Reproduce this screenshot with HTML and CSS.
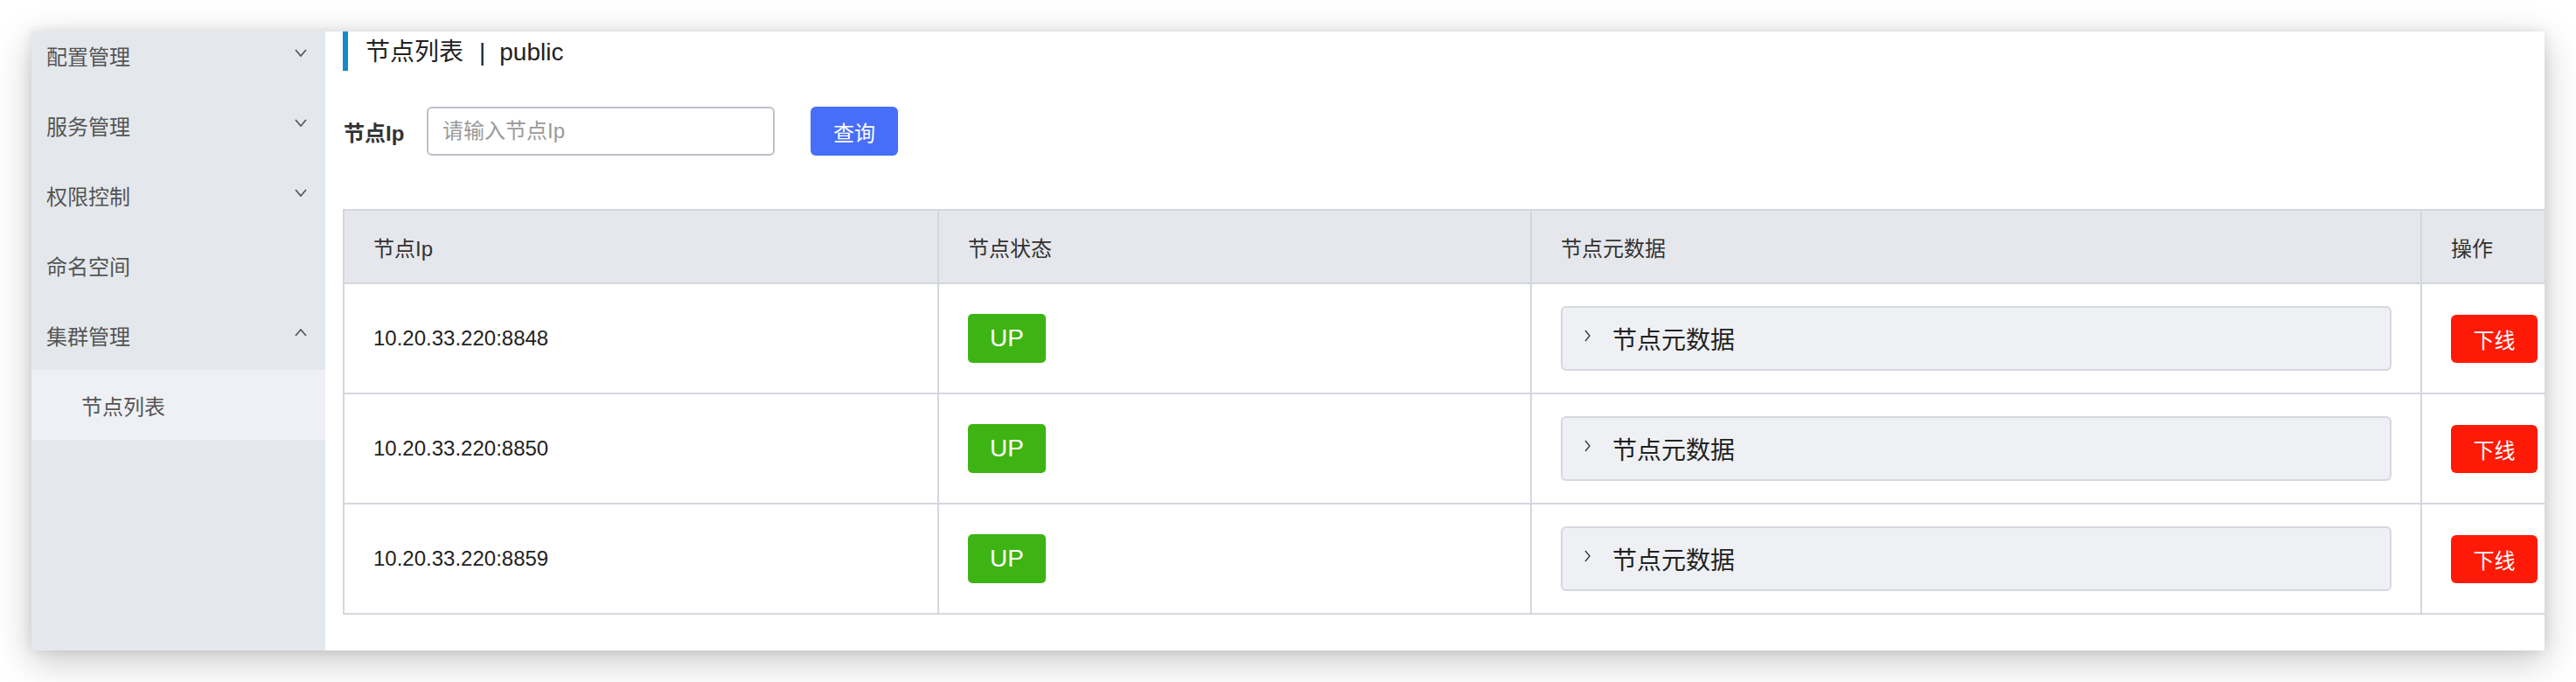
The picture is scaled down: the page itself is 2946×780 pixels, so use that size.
FILE: index.html
```html
<!DOCTYPE html>
<html lang="zh-CN">
<head>
<meta charset="utf-8">
<title>节点列表</title>
<link rel="stylesheet" href="styles.css">
</head>
<body>
<div class="window">
  <aside class="sidebar">
    <ul class="menu">
      <li class="menu-item"><span>配置管理</span><svg class="chev" viewBox="0 0 14 9"><polyline points="1,1 7,8 13,1"/></svg></li>
      <li class="menu-item"><span>服务管理</span><svg class="chev" viewBox="0 0 14 9"><polyline points="1,1 7,8 13,1"/></svg></li>
      <li class="menu-item"><span>权限控制</span><svg class="chev" viewBox="0 0 14 9"><polyline points="1,1 7,8 13,1"/></svg></li>
      <li class="menu-item"><span>命名空间</span></li>
      <li class="menu-item"><span>集群管理</span><svg class="chev" viewBox="0 0 14 9"><polyline points="1,8 7,1 13,8"/></svg></li>
      <li class="sub-item"><span>节点列表</span></li>
    </ul>
  </aside>
  <main class="main">
    <h1 class="title">节点列表<span class="sep">|</span>public</h1>
    <div class="filter">
      <label class="filter-label">节点Ip</label>
      <input class="filter-input" type="text" placeholder="请输入节点Ip">
      <button class="btn-query">查询</button>
    </div>
    <table class="grid">
      <colgroup>
        <col class="c1"><col class="c2"><col class="c3"><col class="c4">
      </colgroup>
      <thead>
        <tr><th>节点Ip</th><th>节点状态</th><th>节点元数据</th><th>操作</th></tr>
      </thead>
      <tbody>
        <tr>
          <td>10.20.33.220:8848</td>
          <td><span class="badge-up">UP</span></td>
          <td><div class="meta"><svg class="meta-chev" viewBox="0 0 7 14"><polyline points="1,1 6,7 1,13"/></svg><span>节点元数据</span></div></td>
          <td><button class="btn-off">下线</button></td>
        </tr>
        <tr>
          <td>10.20.33.220:8850</td>
          <td><span class="badge-up">UP</span></td>
          <td><div class="meta"><svg class="meta-chev" viewBox="0 0 7 14"><polyline points="1,1 6,7 1,13"/></svg><span>节点元数据</span></div></td>
          <td><button class="btn-off">下线</button></td>
        </tr>
        <tr>
          <td>10.20.33.220:8859</td>
          <td><span class="badge-up">UP</span></td>
          <td><div class="meta"><svg class="meta-chev" viewBox="0 0 7 14"><polyline points="1,1 6,7 1,13"/></svg><span>节点元数据</span></div></td>
          <td><button class="btn-off">下线</button></td>
        </tr>
      </tbody>
    </table>
  </main>
</div>
</body>
</html>
```

FILE: styles.css
```css
* { box-sizing: border-box; }
html, body { margin: 0; padding: 0; background: #ffffff; }
body {
  padding: 36px;
  font-family: "Liberation Sans", "Noto Sans CJK SC", sans-serif;
  color: #333;
}
.window {
  width: 2874px;
  height: 708px;
  display: flex;
  overflow: hidden;
  background: #fff;
  box-shadow: 0 12px 40px rgba(0,0,0,0.22), 0 0 12px rgba(0,0,0,0.10);
}
.sidebar {
  width: 336px;
  flex: none;
  background: #e4e8ec;
  overflow: hidden;
}
.menu {
  list-style: none;
  margin: -13px 0 0 0;
  padding: 0;
}
.menu-item {
  height: 80px;
  display: flex;
  align-items: center;
  justify-content: space-between;
  padding: 0 21px 0 17px;
  font-size: 24px;
  color: #555;
}
.chev {
  width: 14px;
  height: 9px;
  margin-top: -5px;
  fill: none;
  stroke: #5a5a5a;
  stroke-width: 1.8;
}
.sub-item {
  height: 80px;
  display: flex;
  align-items: center;
  padding-left: 57px;
  background: #eff0f5;
  font-size: 24px;
  color: #555;
}
.main {
  flex: 1;
  min-width: 0;
  padding-left: 20px;
  overflow: hidden;
}
.title {
  margin: 0;
  height: 45px;
  line-height: 45px;
  padding-left: 20px;
  padding-top: 1px;
  border-left: 6px solid #168acc;
  font-size: 28px;
  font-weight: normal;
  color: #222;
}
.sep { margin: 0 16px 0 18px; }
.filter {
  display: flex;
  align-items: center;
  margin-top: 41px;
  height: 56px;
}
.filter-label {
  font-size: 24px;
  font-weight: bold;
  color: #333;
  width: 95px;
  margin-left: 1px;
}
.filter-input {
  width: 398px;
  height: 56px;
  border: 2px solid #bcc0c8;
  border-radius: 6px;
  padding: 0 16px;
  font-family: inherit;
  font-size: 24px;
  color: #333;
  outline: none;
}
.filter-input::placeholder { color: #9a9a9a; }
.btn-query {
  margin-left: 41px;
  width: 100px;
  height: 56px;
  border: none;
  border-radius: 6px;
  background: #476ef9;
  color: #fff;
  font-family: inherit;
  font-size: 24px;
}
.grid {
  margin-top: 61px;
  border-collapse: collapse;
  table-layout: fixed;
  width: 2640px;
}
.c1 { width: 680px; }
.c2 { width: 678px; }
.c3 { width: 1018px; }
.c4 { width: 264px; }
.grid th, .grid td {
  border: 2px solid #d4d7de;
  text-align: left;
  padding: 0 0 0 33px;
  vertical-align: middle;
}
.grid th {
  height: 84px;
  background: #e5e7ec;
  font-size: 24px;
  font-weight: normal;
  color: #333;
}
.grid td {
  height: 126px;
  font-size: 24px;
  color: #222;
}
.badge-up {
  display: inline-flex;
  align-items: center;
  justify-content: center;
  width: 89px;
  height: 56px;
  border-radius: 5px;
  background: #3db413;
  color: #fff;
  font-size: 28px;
}
.meta {
  width: 950px;
  height: 74px;
  background: #eef0f4;
  border: 2px solid #d5d8de;
  border-radius: 6px;
  display: flex;
  align-items: center;
  padding-left: 25px;
  font-size: 28px;
  color: #222;
}
.meta-chev {
  width: 7px;
  height: 14px;
  margin-right: 25px;
  margin-top: -6px;
  fill: none;
  stroke: #333;
  stroke-width: 1.3;
}
.btn-off {
  width: 99px;
  height: 55px;
  border: none;
  border-radius: 6px;
  background: #fe1a07;
  color: #fff;
  font-family: inherit;
  font-size: 24px;
  margin-left: 0;
}
```
